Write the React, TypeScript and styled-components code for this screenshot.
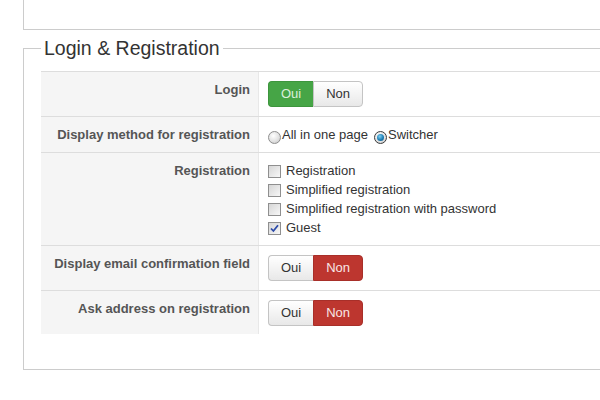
import React from 'react';
import styled, { createGlobalStyle, css } from 'styled-components';

const Global = createGlobalStyle`
  html, body { margin: 0; padding: 0; background: #fff; overflow: hidden; }
  body { font-family: "Liberation Sans", Arial, Helvetica, sans-serif; font-size: 13px; color: #333; }
`;

const Page = styled.div`
  width: 100%;
  overflow: hidden;
`;

const Frame = styled.div`
  padding-left: 23px;
  width: 660px;
`;

const TopBox = styled.div`
  height: 30px;
  box-sizing: border-box;
  border-left: 1px solid #ccc;
  border-bottom: 1px solid #ccc;
`;

const Fieldset = styled.fieldset`
  margin: 7px 0 0 0;
  padding: 12px 0 35px 17px;
  border: 1px solid #ccc;
  border-right: none;
  min-width: 0;
`;

const Legend = styled.legend`
  padding: 0 3px;
  font-size: 19.5px;
  line-height: 22px;
  color: #333;
`;

const Table = styled.div`
  display: flex;
  flex-direction: column;
`;

const Row = styled.div`
  display: grid;
  grid-template-columns: 218px 1fr;
  border-top: 1px solid #ddd;
`;

const Label = styled.div`
  background: #f5f5f5;
  border-right: 1px solid #e8e8e8;
  padding: 9px 8px 8px 4px;
  text-align: right;
  font-weight: bold;
  color: #555;
  line-height: 18px;
`;

const Control = styled.div<{ $pad: string }>`
  padding: ${(p) => p.$pad};
  line-height: 18px;
  color: #333;
`;

const Group = styled.div`
  display: inline-flex;
  height: 26px;
`;

const Seg = styled.span<{ $on?: 'yes' | 'no' }>`
  display: inline-flex;
  align-items: center;
  padding: 0 12px;
  font-size: 13px;
  box-sizing: border-box;
  border: 1px solid #c4c4c4;
  background: linear-gradient(#ffffff, #e8e8e8);
  color: #333;
  &:first-child { border-radius: 4px 0 0 4px; border-right: none; }
  &:last-child { border-radius: 0 4px 4px 0; }
  ${(p) =>
    p.$on === 'yes' &&
    css`
      background: #46a546;
      border-color: #3d953d;
      color: #dcefdc;
    `}
  ${(p) =>
    p.$on === 'no' &&
    css`
      background: #bd362f;
      border-color: #a82f29;
      color: #f8e6e6;
    `}
`;

const Toggle = ({ value }: { value: 'yes' | 'no' }) => (
  <Group>
    <Seg $on={value === 'yes' ? 'yes' : undefined}>Oui</Seg>
    <Seg $on={value === 'no' ? 'no' : undefined}>Non</Seg>
  </Group>
);

const RadioLine = styled.div`
  display: flex;
  align-items: center;
`;

const RadioDot = styled.span<{ $checked?: boolean }>`
  width: 13px;
  height: 13px;
  box-sizing: border-box;
  border-radius: 50%;
  border: 1px solid #8e8e8e;
  background: radial-gradient(circle at 40% 35%, #ffffff 0%, #e2e2e2 55%, #c3c3c3 100%);
  margin-top: 4px;
  margin-right: 1px;
  position: relative;
  flex: none;
  ${(p) =>
    p.$checked &&
    css`
      border-color: #3a3a3a;
      &::after {
        content: '';
        position: absolute;
        left: 2px;
        top: 2px;
        width: 7px;
        height: 7px;
        border-radius: 50%;
        background: radial-gradient(circle at 40% 35%, #7fd0f2 0%, #1e7fb5 55%, #0b4f7c 100%);
      }
    `}
`;

const RadioText = styled.span`
  margin-right: 6px;
`;

const CheckList = styled.div`
  display: flex;
  flex-direction: column;
`;

const CheckLine = styled.div`
  display: flex;
  align-items: center;
  line-height: 19px;
  height: 19px;
`;

const Box = styled.span`
  width: 13px;
  height: 13px;
  box-sizing: border-box;
  border: 1px solid #8f8f8f;
  background: linear-gradient(135deg, #d6d6d6, #f7f7f7);
  margin-right: 5px;
  margin-top: 2px;
  display: inline-flex;
  align-items: center;
  justify-content: center;
  flex: none;
`;

const Check = ({ label, checked }: { label: string; checked?: boolean }) => (
  <CheckLine>
    <Box>
      {checked && (
        <svg width="9" height="9" viewBox="0 0 9 9">
          <path d="M1 4.5 L3.4 7 L8 1.2" fill="none" stroke="#2b4aa8" strokeWidth="1.8" />
        </svg>
      )}
    </Box>
    <span>{label}</span>
  </CheckLine>
);

export default function App() {
  return (
    <>
      <Global />
      <Page>
        <Frame>
          <TopBox />
          <Fieldset>
            <Legend>Login &amp; Registration</Legend>
            <Table>
              <Row>
                <Label>Login</Label>
                <Control $pad="9px 9px 9px 9px">
                  <Toggle value="yes" />
                </Control>
              </Row>
              <Row>
                <Label>Display method for registration</Label>
                <Control $pad="9px 9px 8px 9px">
                  <RadioLine>
                    <RadioDot />
                    <RadioText>All in one page</RadioText>
                    <RadioDot $checked />
                    <RadioText>Switcher</RadioText>
                  </RadioLine>
                </Control>
              </Row>
              <Row>
                <Label>Registration</Label>
                <Control $pad="8px 9px 8px 9px">
                  <CheckList>
                    <Check label="Registration" />
                    <Check label="Simplified registration" />
                    <Check label="Simplified registration with password" />
                    <Check label="Guest" checked />
                  </CheckList>
                </Control>
              </Row>
              <Row>
                <Label>Display email confirmation field</Label>
                <Control $pad="9px 9px 9px 9px">
                  <Toggle value="no" />
                </Control>
              </Row>
              <Row>
                <Label>Ask address on registration</Label>
                <Control $pad="9px 9px 8px 9px">
                  <Toggle value="no" />
                </Control>
              </Row>
            </Table>
          </Fieldset>
        </Frame>
      </Page>
    </>
  );
}
